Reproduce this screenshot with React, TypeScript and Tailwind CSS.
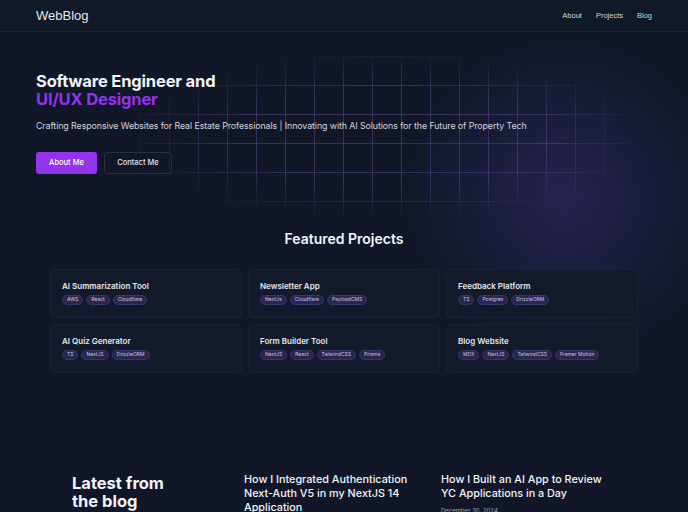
import React from "react";

const projects = [
  { title: "AI Summarization Tool", tags: ["AWS", "React", "Cloudflare"] },
  { title: "Newsletter App", tags: ["NextJs", "Cloudflare", "PayloadCMS"] },
  { title: "Feedback Platform", tags: ["TS", "Postgres", "DrizzleORM"] },
  { title: "AI Quiz Generator", tags: ["TS", "NextJS", "DrizzleORM"] },
  { title: "Form Builder Tool", tags: ["NextJS", "React", "TailwindCSS", "Prisma"] },
  { title: "Blog Website", tags: ["MDX", "NextJS", "TailwindCSS", "Framer Motion"] },
];

export default function App() {
  return (
    <div className="min-h-[512px] w-full overflow-hidden bg-[#111729] text-white font-['Inter',sans-serif]">
      {/* Navbar */}
      <header className="flex h-[32px] items-center justify-between border-b border-[#1c2233] bg-[#111827] pl-[36px] pr-[36px]">
        <div className="font-['Liberation_Sans',Arial,sans-serif] text-[13px] text-[#e5e7eb]">WebBlog</div>
        <nav className="flex items-center gap-[14px] font-['Liberation_Sans',Arial,sans-serif] text-[7.5px] text-[#d1d5db]">
          <span>About</span>
          <span>Projects</span>
          <span>Blog</span>
        </nav>
      </header>

      {/* Hero */}
      <section className="relative h-[199px]">
        <div className="pointer-events-none absolute left-[400px] top-[0px] h-[330px] w-[330px] rounded-full bg-[radial-gradient(circle,rgba(85,65,170,0.30)_0%,rgba(60,50,130,0.14)_45%,rgba(17,23,41,0)_70%)]" />
        <div className="pointer-events-none absolute left-[140px] top-[24px] h-[160px] w-[490px] bg-[linear-gradient(to_right,rgba(150,120,230,0.26)_1px,transparent_1px),linear-gradient(to_bottom,rgba(150,120,230,0.26)_1px,transparent_1px)] bg-[size:29px_29px] [mask-image:radial-gradient(ellipse_at_center,black_45%,transparent_78%)]" />
        <div className="relative pl-[36px] pt-[40px]">
          <h1 className="text-[16.5px] font-bold leading-[18px] tracking-[-0.01em]">
            <span className="block text-[#f3f4f6]">Software Engineer and</span>
            <span className="block text-[#9333ea]">UI/UX Designer</span>
          </h1>
          <p className="mt-[12px] text-[8.85px] leading-[12px] text-[#d1d5db] tracking-[-0.01em]">
            Crafting Responsive Websites for Real Estate Professionals | Innovating with AI Solutions for the Future of Property Tech
          </p>
          <div className="mt-[20px] flex gap-[7px]">
            <button className="h-[22px] w-[61px] rounded-[3px] bg-[#9333ea] text-[7.5px] font-medium text-white">About Me</button>
            <button className="h-[22px] w-[68px] rounded-[3px] border border-[#2a3042] text-[7.5px] font-medium text-[#e5e7eb]">Contact Me</button>
          </div>
        </div>
      </section>

      {/* Featured projects */}
      <section className="relative">
        <h2 className="text-center text-[14px] font-semibold leading-[16px] text-[#f3f4f6]">Featured Projects</h2>
        <div className="mx-[50px] mt-[22px] grid grid-cols-3 gap-[6px]">
          {projects.map((p) => (
            <div key={p.title} className="h-[49px] rounded-[4px] border border-[#1b2133] bg-[#131a2c] px-[11px] pt-[11px]">
              <div className="text-[8px] font-semibold leading-[10px] text-[#e5e7eb]">{p.title}</div>
              <div className="mt-[4px] flex gap-[3px]">
                {p.tags.map((t) => (
                  <span key={t} className="flex h-[10px] items-center rounded-full border border-[#3a3468] bg-[#2a2650] px-[4px] text-[5px] text-[#c9c5e6]">
                    {t}
                  </span>
                ))}
              </div>
            </div>
          ))}
        </div>
      </section>

      {/* Blog */}
      <section className="flex pl-[72px] pt-[100px]">
        <div className="w-[172px] pt-[1px]">
          <h2 className="text-[16.5px] font-bold leading-[18px] text-[#f3f4f6]">
            Latest from<br />the blog
          </h2>
        </div>
        <div className="w-[197px]">
          <h3 className="w-[180px] text-[10.8px] font-medium leading-[14px] text-[#f3f4f6]">
            How I Integrated Authentication Next-Auth V5 in my NextJS 14 Application
          </h3>
        </div>
        <div className="w-[165px]">
          <h3 className="text-[10.8px] font-medium leading-[14px] text-[#f3f4f6]">
            How I Built an AI App to Review YC Applications in a Day
          </h3>
          <div className="mt-[5px] text-[6px] text-[#9ca3af]">December 30, 2024</div>
        </div>
      </section>
    </div>
  );
}
